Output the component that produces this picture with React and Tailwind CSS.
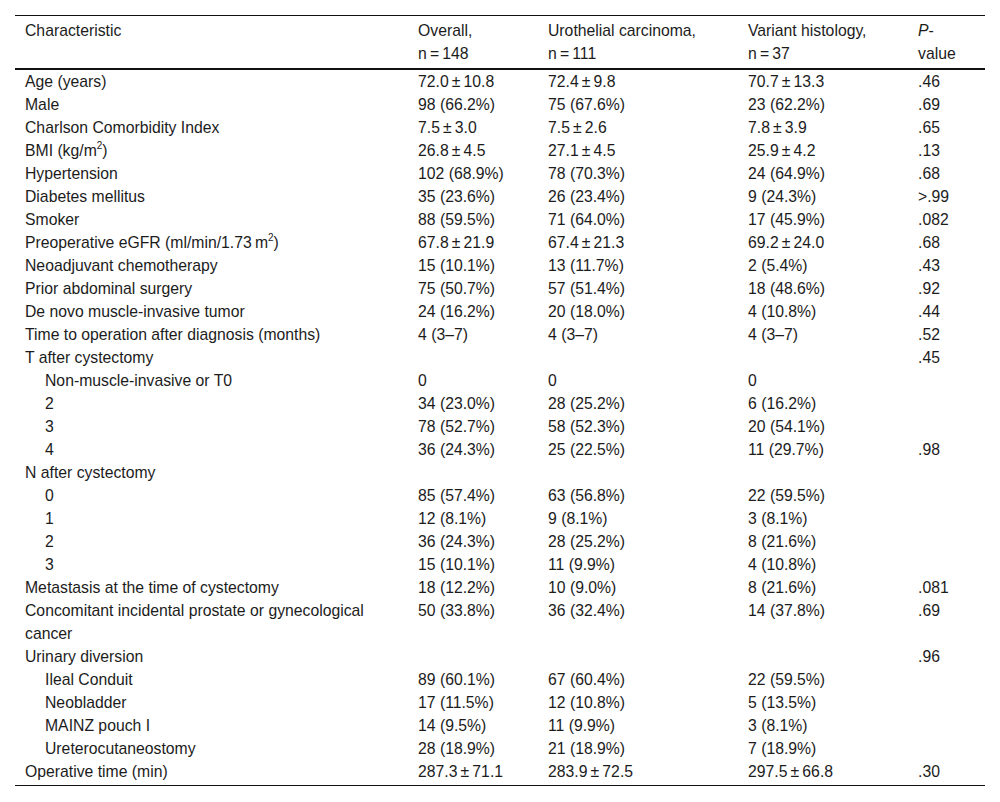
import React from "react";

const T = "\u2009";
const pm = (a, b) => `${a}${T}±${T}${b}`;

const M2 = () => (
  <>
    m<sup className="text-[10px] relative -top-[1px] align-super leading-none">2</sup>
  </>
);

const rows = [
  ["Age (years)", pm("72.0", "10.8"), pm("72.4", "9.8"), pm("70.7", "13.3"), ".46"],
  ["Male", "98 (66.2%)", "75 (67.6%)", "23 (62.2%)", ".69"],
  ["Charlson Comorbidity Index", pm("7.5", "3.0"), pm("7.5", "2.6"), pm("7.8", "3.9"), ".65"],
  [<>BMI (kg/<M2 />)</>, pm("26.8", "4.5"), pm("27.1", "4.5"), pm("25.9", "4.2"), ".13"],
  ["Hypertension", "102 (68.9%)", "78 (70.3%)", "24 (64.9%)", ".68"],
  ["Diabetes mellitus", "35 (23.6%)", "26 (23.4%)", "9 (24.3%)", ">.99"],
  ["Smoker", "88 (59.5%)", "71 (64.0%)", "17 (45.9%)", ".082"],
  [<>Preoperative eGFR (ml/min/1.73{T}<M2 />)</>, pm("67.8", "21.9"), pm("67.4", "21.3"), pm("69.2", "24.0"), ".68"],
  ["Neoadjuvant chemotherapy", "15 (10.1%)", "13 (11.7%)", "2 (5.4%)", ".43"],
  ["Prior abdominal surgery", "75 (50.7%)", "57 (51.4%)", "18 (48.6%)", ".92"],
  ["De novo muscle-invasive tumor", "24 (16.2%)", "20 (18.0%)", "4 (10.8%)", ".44"],
  ["Time to operation after diagnosis (months)", "4 (3–7)", "4 (3–7)", "4 (3–7)", ".52"],
  ["T after cystectomy", "", "", "", ".45"],
  ["Non-muscle-invasive or T0", "0", "0", "0", "", true],
  ["2", "34 (23.0%)", "28 (25.2%)", "6 (16.2%)", "", true],
  ["3", "78 (52.7%)", "58 (52.3%)", "20 (54.1%)", "", true],
  ["4", "36 (24.3%)", "25 (22.5%)", "11 (29.7%)", ".98", true],
  ["N after cystectomy", "", "", "", ""],
  ["0", "85 (57.4%)", "63 (56.8%)", "22 (59.5%)", "", true],
  ["1", "12 (8.1%)", "9 (8.1%)", "3 (8.1%)", "", true],
  ["2", "36 (24.3%)", "28 (25.2%)", "8 (21.6%)", "", true],
  ["3", "15 (10.1%)", "11 (9.9%)", "4 (10.8%)", "", true],
  ["Metastasis at the time of cystectomy", "18 (12.2%)", "10 (9.0%)", "8 (21.6%)", ".081"],
  [<>Concomitant incidental prostate or gynecological<br />cancer</>, "50 (33.8%)", "36 (32.4%)", "14 (37.8%)", ".69"],
  ["Urinary diversion", "", "", "", ".96"],
  ["Ileal Conduit", "89 (60.1%)", "67 (60.4%)", "22 (59.5%)", "", true],
  ["Neobladder", "17 (11.5%)", "12 (10.8%)", "5 (13.5%)", "", true],
  ["MAINZ pouch I", "14 (9.5%)", "11 (9.9%)", "3 (8.1%)", "", true],
  ["Ureterocutaneostomy", "28 (18.9%)", "21 (18.9%)", "7 (18.9%)", "", true],
  ["Operative time (min)", pm("287.3", "71.1"), pm("283.9", "72.5"), pm("297.5", "66.8"), ".30"],
];

const th = "text-left font-normal align-top pl-[10px] pt-[3px] pb-[3px] border-solid border-b-2 border-[#111]";

export default function App() {
  return (
    <div
      className="bg-white w-[1000px] min-h-[802px] px-[15px] pt-[15px] text-[#1c1c1c]"
      style={{ fontFamily: '"Liberation Sans", Arial, sans-serif' }}
    >
      <div className="w-[970px] border-solid border-y border-[#111] pb-[2px]">
        <table className="w-[970px] border-separate border-spacing-0 table-fixed text-[15.75px] leading-[23px]">
          <colgroup>
            <col className="w-[393px]" />
            <col className="w-[130px]" />
            <col className="w-[200px]" />
            <col className="w-[170px]" />
            <col className="w-[77px]" />
          </colgroup>
          <thead>
            <tr>
              <th className={th}>Characteristic</th>
              <th className={th}>
                Overall,<br />n{T}={T}148
              </th>
              <th className={th}>
                Urothelial carcinoma,<br />n{T}={T}111
              </th>
              <th className={th}>
                Variant histology,<br />n{T}={T}37
              </th>
              <th className={th}>
                <i>P</i>-<br />value
              </th>
            </tr>
          </thead>
          <tbody>
            {rows.map((r, i) => (
              <tr key={i}>
                <td className={`align-top p-0 ${r[5] ? "pl-[30px]" : "pl-[10px]"}`}>{r[0]}</td>
                <td className="align-top p-0 pl-[10px]">{r[1]}</td>
                <td className="align-top p-0 pl-[10px]">{r[2]}</td>
                <td className="align-top p-0 pl-[10px]">{r[3]}</td>
                <td className="align-top p-0 pl-[10px]">{r[4]}</td>
              </tr>
            ))}
          </tbody>
        </table>
      </div>
    </div>
  );
}
